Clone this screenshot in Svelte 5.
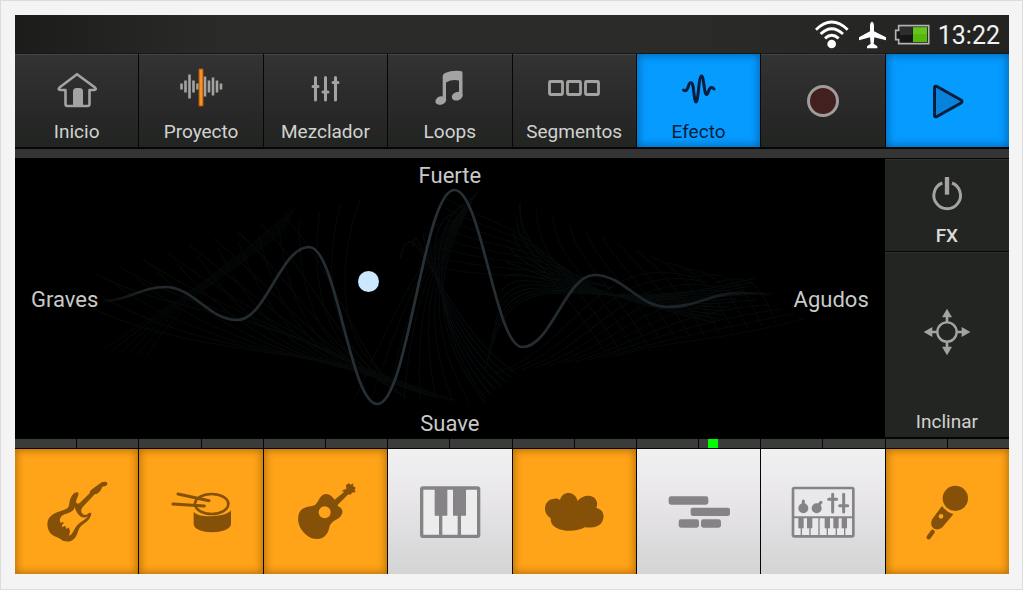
<script>
  const tools = [
    { id: 'home', label: 'Inicio' },
    { id: 'project', label: 'Proyecto' },
    { id: 'mixer', label: 'Mezclador' },
    { id: 'loops', label: 'Loops' },
    { id: 'segments', label: 'Segmentos' },
    { id: 'effect', label: 'Efecto', active: true },
  ];

  const pads = [
    { id: 'guitar', name: 'Guitarra eléctrica', view: '110 136 240 216', on: true },
    { id: 'drum', name: 'Batería', view: '482 136 240 216', on: true },
    { id: 'acoustic', name: 'Guitarra acústica', view: '74 136 240 216', on: true },
    { id: 'piano', name: 'Piano', view: '447 136 240 216', on: false },
    { id: 'cloud', name: 'Ambiente', view: '70 136 240 216', on: true },
    { id: 'clips', name: 'Bloques', view: '442 136 240 216', on: false },
    { id: 'synth', name: 'Sintetizador', view: '82 136 240 216', on: false },
    { id: 'mic', name: 'Micrófono', view: '455 136 240 216', on: true },
  ];

  // [x, half height] of each waveform bar in the project icon
  const bars = [[12.5, 3], [16.5, 6], [20.5, 12], [24.5, 6], [28.5, 3], [36, 10], [40, 6], [44, 9], [48, 6], [52, 3]];

  const extremes = [[88, 143], [150, 129], [222, 162], [294, 89], [362, 246], [439, 32], [507, 189], [579, 117], [652, 149], [725, 135], [756, 136]];

  function smooth(points) {
    let d = `M${points[0][0]} ${points[0][1]}`;
    for (let i = 1; i < points.length; i++) {
      const [x0, y0] = points[i - 1];
      const [x1, y1] = points[i];
      const k = (x1 - x0) * 0.4;
      d += `C${x0 + k} ${y0} ${x1 - k} ${y1} ${x1} ${y1}`;
    }
    return d;
  }

  // Each fan blends one cubic curve into another over a number of steps.
  const fans = [
    { from: [60, 142, 150, 190, 250, 190, 350, 210], to: [345, 40, 320, 110, 310, 230, 440, 242], n: 15, tone: '#0b1512' },
    { from: [80, 115, 140, 150, 220, 150, 330, 200], to: [270, 60, 320, 110, 340, 200, 390, 240], n: 9, tone: '#0c1613' },
    { from: [90, 190, 150, 150, 200, 120, 280, 50], to: [130, 200, 180, 120, 230, 110, 270, 70], n: 6, tone: '#0a1110' },
    { from: [385, 100, 400, 40, 420, 160, 500, 215], to: [462, 34, 400, 90, 430, 190, 470, 240], n: 7, tone: '#0f1a20' },
    { from: [340, 240, 380, 150, 410, 90, 462, 34], to: [470, 245, 420, 180, 410, 120, 462, 34], n: 9, tone: '#0c1514' },
    { from: [430, 40, 480, 70, 500, 60, 560, 125], to: [425, 110, 470, 120, 530, 115, 600, 130], n: 8, tone: '#0b1413' },
    { from: [504, 45, 505, 120, 600, 140, 700, 165], to: [470, 210, 500, 80, 560, 170, 740, 120], n: 12, tone: '#0e1818' },
    { from: [505, 45, 500, 100, 545, 120, 590, 195], to: [700, 125, 740, 110, 750, 140, 760, 165], n: 13, tone: '#0b1412' },
    { from: [480, 215, 560, 190, 580, 90, 680, 120], to: [600, 198, 660, 180, 700, 185, 790, 160], n: 10, tone: '#0b1412' },
  ];

  const mesh = fans.flatMap(({ from, to, n, tone }) =>
    Array.from({ length: n }, (_, i) => {
      const p = from.map((v, k) => v + ((to[k] - v) * i) / (n - 1));
      return { tone, d: `M${p[0]} ${p[1]}C${p.slice(2).join(' ')}` };
    })
  );

  const beat = 11;
</script>

<div class="page">
  <div class="app">
    <header class="status">
      <svg width="36" height="30" viewBox="555 58 108 90" aria-hidden="true">
        <g fill="none" stroke="#fff" stroke-width="8.500">
          <path d="M561 90Q608 44 656 90" />
          <path d="M575 103Q608 71 642 103" />
          <path d="M588 116Q608 98 629 116" />
        </g>
        <circle cx="608" cy="133" r="13" fill="#fff" />
      </svg>
      <svg width="28" height="29" viewBox="684 60 84 87" aria-hidden="true">
        <path fill="#fff" d="M726 65c-4 0-6 7-6 13v16l-33 18v9l33-9 2 19-11 8v6h31v-6l-11-8 2-19 35 9v-9l-36-18V78c0-6-2-13-6-13z" />
      </svg>
      <svg width="36" height="21" viewBox="790 72 108 63" aria-hidden="true">
        <path d="M804 77h90v54h-90v-12h-9V91h9z" fill="#151615" stroke="#b3b3b3" stroke-width="5" />
        <path d="M808 81h38v24h-38z" fill="#2c2d2c" />
        <path d="M847 82h42v44h-42z" fill="#55b80b" />
        <path d="M847 82h42v20h-42z" fill="#65c51c" />
      </svg>
      <time class="clock">13:22</time>
    </header>

    <nav class="tools">
      {#each tools as tool (tool.id)}
        <button class="tool" class:active={tool.active}>
          <svg width="64" height="48" viewBox="0 0 64 48" aria-hidden="true">
            {#if tool.id === 'home'}
              <path d="M32 8.200L14.500 21.500Q12.500 24 15.500 24H20.500V38Q20.500 40 22.500 40H42.500Q44.500 40 44.500 38V24H49Q52 24 50 21.500Z" fill="none" stroke="currentColor" stroke-width="2.600" stroke-linejoin="round" />
              <path d="M28 40V25.500Q28 22 31.500 22H34.500Q38 22 38 25.500V40Z" fill="currentColor" />
            {:else if tool.id === 'project'}
              {#each bars as [x, h]}
                <path d="M{x} {20.5 - h}V{20.5 + h}" stroke="currentColor" stroke-width="2.600" />
              {/each}
              <rect x="29.500" y="2.500" width="5" height="38" rx="1" fill="#a95404" />
              <rect x="30.500" y="3.500" width="3" height="36" fill="#f6922a" />
            {:else if tool.id === 'mixer'}
              <g stroke="currentColor" stroke-width="3" stroke-linecap="round">
                <path d="M22.500 11.500V34M32.500 11.500V34M42.500 11.500V34" />
                <path d="M20 20.500H25M30 26H35M40 16.500H45" />
              </g>
            {:else if tool.id === 'loops'}
              <path d="M24.700 10Q25 8 27 7Q34 4 42.500 5Q44.500 5 44.500 7V30H41V14.500Q34 13 28 16.500V34H24.700Z" fill="currentColor" />
              <ellipse cx="22.800" cy="34.500" rx="5.500" ry="4.200" transform="rotate(-18 22.800 34.500)" fill="currentColor" />
              <ellipse cx="39.200" cy="30.200" rx="5.500" ry="4.200" transform="rotate(-18 39.200 30.200)" fill="currentColor" />
            {:else if tool.id === 'segments'}
              <g fill="none" stroke="currentColor" stroke-width="2.800">
                <rect x="7.500" y="15.500" width="13" height="13" rx="1" />
                <rect x="25.500" y="15.500" width="13" height="13" rx="1" />
                <rect x="43.500" y="15.500" width="13" height="13" rx="1" />
              </g>
            {:else}
              <path d="M16.500 24C19 26.500 20.500 23 21.500 20C22.500 16 25 15.500 26 20C27 26 27.500 36 29 36C31.500 36 31.500 10 34.500 10C37 10 37 28.500 39.500 28.500C41.500 28.500 41.500 21.500 44.500 21.500Q46 21.500 47 23" fill="none" stroke="currentColor" stroke-width="3" stroke-linecap="round" stroke-linejoin="round" />
            {/if}
          </svg>
          <span>{tool.label}</span>
        </button>
      {/each}
      <button class="tool transport" aria-label="Grabar">
        <svg width="36" height="36" viewBox="0 0 36 36" aria-hidden="true">
          <circle cx="18" cy="18" r="14.500" fill="#42201f" stroke="#a09c9b" stroke-width="3" />
        </svg>
      </button>
      <button class="tool transport active" aria-label="Reproducir">
        <svg width="36" height="36" viewBox="0 0 36 36" aria-hidden="true">
          <path d="M5.500 5Q5.500 2.500 8 3.500L32 17Q34 18.500 32 20L8 33.500Q5.500 34.500 5.500 32Z" fill="#0783dc" stroke="#071d3c" stroke-width="3" stroke-linejoin="round" />
        </svg>
      </button>
    </nav>

    <div class="strip"></div>

    <main class="stage">
      <section class="pad-area">
        <svg class="wave" viewBox="0 0 869 280" preserveAspectRatio="none" aria-hidden="true">
          <defs>
            <linearGradient id="line" gradientUnits="userSpaceOnUse" x1="88" y1="0" x2="756" y2="0">
              <stop offset="0" stop-color="#2b353b" stop-opacity="0.100" />
              <stop offset="0.080" stop-color="#22292e" />
              <stop offset="0.500" stop-color="#273137" />
              <stop offset="0.850" stop-color="#1e2529" />
              <stop offset="1" stop-color="#2b353b" stop-opacity="0.100" />
            </linearGradient>
          </defs>
          <g fill="none" opacity="0.500">
            {#each mesh as curve}
              <path d={curve.d} stroke={curve.tone} stroke-width="1" />
            {/each}
          </g>
          <path d={smooth(extremes)} fill="none" stroke="url(#line)" stroke-width="2.700" />
        </svg>
        <span class="axis top">Fuerte</span>
        <span class="axis left">Graves</span>
        <span class="axis right">Agudos</span>
        <span class="axis bottom">Suave</span>
        <span class="dot"></span>
      </section>

      <aside class="side">
        <button class="side-btn">
          <svg width="48" height="48" viewBox="159 88 144 144" aria-hidden="true">
            <path d="M217 127A40 40 0 1 0 246 127" fill="none" stroke="currentColor" stroke-width="9" />
            <path d="M231 109V162" stroke="currentColor" stroke-width="13" />
          </svg>
          <span class="strong">FX</span>
        </button>
        <button class="side-btn tilt">
          <svg width="48" height="48" viewBox="157 507 144 144" aria-hidden="true">
            <circle cx="229" cy="579" r="29" fill="none" stroke="currentColor" stroke-width="7" />
            {#each [0, 90, 180, 270] as turn}
              <path d="M229 509L244 535H233V549H225V535H214Z" fill="currentColor" transform="rotate({turn} 229 579)" />
            {/each}
          </svg>
          <span>Inclinar</span>
        </button>
      </aside>
    </main>

    <div class="beats">
      {#each Array(16) as _, i}
        <div class="beat">{#if i === beat}<i class="cursor"></i>{/if}</div>
      {/each}
    </div>

    <footer class="pads">
      {#each pads as pad (pad.id)}
        <button class="pad" class:on={pad.on} aria-label={pad.name}>
          <svg width="80" height="72" viewBox={pad.view} aria-hidden="true">
            {#if pad.id === 'guitar'}
              <path fill="currentColor" d="M234 186C224 182 216 192 211 203C204 218 210 228 199 234C185 241 165 243 151 257C138 270 140 286 145 299C152 316 170 318 181 326C192 335 211 335 221 325C233 312 233 293 243 285C256 275 268 270 273 250C272 244 266 247 262 250C254 256 245 251 243 243C242 236 245 231 250 226L283 191Q298 190 306 168Q321 168 321 158C319 151 311 153 304 155L277 174Q267 180 268 188L238 217C229 222 226 216 228 209C230 200 236 195 234 186Z" />
              <path fill="#ffa318" d="M223 229C222 242 206 247 190 252C178 257 176 270 181 277Q192 270 189 279Q180 286 186 291Q191 283 196 287L198 300Q203 286 206 293Q212 303 205 315C216 315 220 298 228 287C238 274 254 269 264 256Q252 265 240 257C230 250 227 240 223 229Z" />
              <path fill="currentColor" d="M178 281l12 10 10 3 8 13-10-3-12-8z" />
            {:else if pad.id === 'drum'}
              <g fill="none" stroke="currentColor" stroke-linecap="round">
                <ellipse cx="634" cy="220" rx="50" ry="30" stroke-width="8" />
                <path d="M533 190L626 210M518 220L612 226" stroke-width="9" />
              </g>
              <path fill="currentColor" d="M580 243C590 262 676 262 692 239V280C690 312 582 314 580 280Z" />
            {:else if pad.id === 'acoustic'}
              <path fill="currentColor" d="M250 177L258 175 257 164 265 158 271 162 279 158 278 166 286 171 283 178 286 184 275 186 271 192 264 191 231 224Q236 230 241 231C250 241 247 252 237 261C224 269 211 274 207 290C203 310 192 325 171 325C151 325 137 315 124 298C110 278 109 249 125 236C138 225 154 229 164 223C177 212 178 192 196 190Q207 189 216 199L223 207L252 183L244 182Z" />
              <circle cx="193" cy="245" r="18" fill="#ffa318" />
            {:else if pad.id === 'piano'}
              <rect x="482" y="172" width="171" height="145" rx="4" fill="#ececed" stroke="currentColor" stroke-width="10" />
              <path fill="currentColor" d="M521 172H559V255H544V317H534V255H521ZM576 172H615V255H600V317H590V255H576Z" />
            {:else if pad.id === 'cloud'}
              <path fill="currentColor" d="M120 262C96 252 96 207 130 204Q141 203 148 208C155 180 193 180 201 211C215 191 252 187 259 215Q260 224 257 232C276 236 282 252 277 267C269 290 245 292 222 290C202 303 159 304 138 292C125 285 119 275 120 262Z" />
            {:else if pad.id === 'clips'}
              <g fill="currentColor">
                <rect x="471" y="197" width="119" height="25" rx="7" />
                <rect x="537" y="231" width="118" height="25" rx="7" />
                <rect x="501" y="266" width="61" height="25" rx="7" />
                <rect x="568" y="266" width="60" height="25" rx="7" />
              </g>
            {:else if pad.id === 'synth'}
              <rect x="112" y="172" width="181" height="145" rx="4" fill="#e9e8ea" stroke="currentColor" stroke-width="8" />
              <path d="M112 260H293" stroke="currentColor" stroke-width="6" />
              <g fill="currentColor">
                <circle cx="143" cy="233" r="15" />
                <circle cx="183" cy="233" r="15" />
                <path d="M128 262H144V293H128ZM154 262H170V293H154ZM207 262H223V293H207ZM233 262H249V293H233ZM258 262H274V293H258Z" />
              </g>
              <g stroke="currentColor" fill="none">
                <path d="M137 290V317M163 290V317M190 262V317M215 290V317M242 290V317M267 290V317" stroke-width="4" />
                <path d="M143 230V211M185 228L196 215" stroke-width="9" stroke-linecap="round" />
                <path d="M231 191V244M264 191V244M219 206H243M252 225H276" stroke-width="9" stroke-linecap="round" />
              </g>
            {:else}
              <g fill="currentColor">
                <circle cx="600" cy="203" r="38" />
                <path d="M560 226Q572 244 594 251L561 290C545 304 524 293 528 273Q529 267 533 262Z" />
                <path d="M520 320L532 303" stroke="currentColor" stroke-width="13" stroke-linecap="round" />
              </g>
              <circle cx="557" cy="257" r="7" fill="#ffa318" />
            {/if}
          </svg>
        </button>
      {/each}
    </footer>
  </div>
</div>

<style>
  .page {
    box-sizing: border-box;
    min-height: 100vh;
    display: flex;
    padding: 14px 13px 15px 14px;
    border: 1px solid #dcdcdc;
    background: #f4f4f4;
    font-family: Roboto, 'Liberation Sans', sans-serif;
  }

  .app {
    flex: 1;
    min-width: 0;
    display: flex;
    flex-direction: column;
    background: #050605;
  }

  button {
    margin: 0;
    padding: 0;
    border: 0;
    font: inherit;
    cursor: pointer;
  }

  svg {
    display: block;
    flex: none;
  }

  .status {
    display: flex;
    align-items: center;
    justify-content: flex-end;
    gap: 8px;
    height: 38px;
    padding-right: 9px;
    background: linear-gradient(90deg, #1c1d1b, #2a2b29 20%, #2a2b29 70%, #222321);
    border-bottom: 1px solid #161716;
  }

  .clock {
    padding-top: 4px;
    color: #f2f2f2;
    font-size: 25px;
    line-height: 28px;
  }

  .tools,
  .pads {
    display: grid;
    grid-template-columns: repeat(8, minmax(0, 1fr));
    gap: 1px;
  }

  .tool {
    display: flex;
    flex-direction: column;
    align-items: center;
    gap: 8px;
    padding: 12px 0 5px;
    color: #a3a4a2;
    font-size: 19px;
    line-height: 20px;
    background: linear-gradient(#323332, #2b2c2b 40%, #262726 70%, #222422);
    box-shadow: inset 0 1px 0 #454645;
  }

  .tool span {
    color: #d2d2d1;
  }

  .tool.transport {
    justify-content: center;
    padding: 0;
  }

  .tool.active {
    color: #071d3c;
    background: #059bff;
    box-shadow: inset 0 0 8px 1px #0462a8;
  }

  .tool.active span {
    color: #071d3c;
  }

  .strip {
    height: 9px;
    margin-top: 2px;
    background: #333433;
  }

  .stage {
    flex: 1;
    display: grid;
    grid-template-columns: 7fr 1fr;
    min-height: 280px;
  }

  .pad-area {
    position: relative;
    background: #000;
  }

  .wave {
    position: absolute;
    inset: 0;
    width: 100%;
    height: 100%;
  }

  .axis {
    position: absolute;
    color: #c9c9c9;
    font-size: 22px;
    line-height: 26px;
  }

  .top,
  .bottom {
    left: 50%;
    transform: translateX(-50%);
  }

  .top {
    top: 5px;
  }

  .bottom {
    bottom: 1px;
  }

  .left,
  .right {
    top: 50%;
    margin-top: -11px;
  }

  .left {
    left: 16px;
  }

  .right {
    right: 16px;
  }

  .dot {
    position: absolute;
    left: 40.7%;
    top: 44.3%;
    width: 21px;
    height: 21px;
    margin: -11px;
    border-radius: 50%;
    background: #cbe8ff;
  }

  .side {
    display: flex;
    flex-direction: column;
    gap: 1px;
    padding: 1px 0;
  }

  .side-btn {
    display: flex;
    flex-direction: column;
    align-items: center;
    gap: 8px;
    padding: 11px 0 5px;
    color: #a3a4a2;
    font-size: 19px;
    line-height: 20px;
    background: #232523;
    box-shadow: inset 0 1px 0 #2e302e;
  }

  .side-btn span {
    color: #d2d2d1;
  }

  .side-btn .strong {
    font-weight: 500;
    color: #dcdcdc;
  }

  .tilt {
    flex: 1;
    gap: 0;
    padding-top: 0;
  }

  .tilt svg {
    margin: auto 0;
  }

  .beats {
    display: grid;
    grid-template-columns: repeat(16, minmax(0, 1fr));
    gap: 1px;
    padding: 1px 0;
  }

  .beat {
    position: relative;
    height: 9px;
    background: #3a3c39;
  }

  .cursor {
    position: absolute;
    left: 15%;
    top: 0;
    width: 10px;
    height: 100%;
    background: #04fb06;
  }

  .pad {
    display: flex;
    align-items: center;
    justify-content: center;
    height: 125px;
    color: #858385;
    background: linear-gradient(#f0f0f1, #e8e6e9 40%, #dddcde 70%, #d3d4d4);
  }

  .pad.on {
    color: #855008;
    background: #ffa318;
    box-shadow: inset 0 0 9px 1px #b06c08;
  }
</style>
